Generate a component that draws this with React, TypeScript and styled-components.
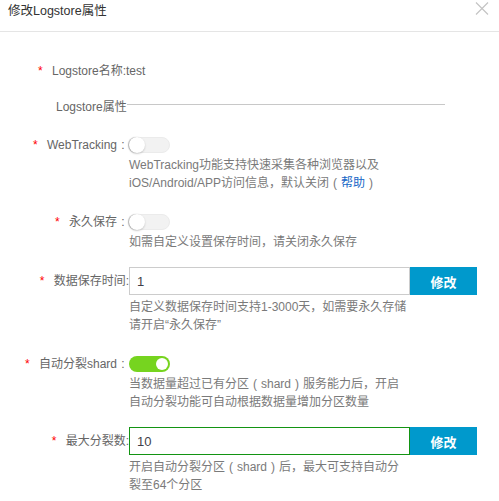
import React from 'react';
import styled, { createGlobalStyle } from 'styled-components';

const GlobalStyle = createGlobalStyle`
  html, body { margin: 0; padding: 0; background: #fff; }
  body {
    font-family: "Liberation Sans", "Noto Sans CJK SC", sans-serif;
    font-size: 12px;
    color: #666;
  }
  * { box-sizing: border-box; }
`;

const Dialog = styled.div`
  width: 499px;
  height: 501px;
  background: #fff;
  overflow: hidden;
`;

const Header = styled.header`
  height: 32px;
  border-bottom: 1px solid #e5e5e5;
  display: flex;
  justify-content: space-between;
  align-items: flex-start;
  padding: 0 10px 0 8px;
`;

const Title = styled.h1`
  margin: 0;
  font-size: 12.5px;
  font-weight: normal;
  line-height: 22px;
  color: #333;
`;

const Close = styled.button`
  margin-top: 2px;
  padding: 0;
  border: none;
  background: none;
  width: 14px;
  height: 13px;
  display: flex;
`;

const Body = styled.div`
  padding-top: 29px;
`;

const Star = styled.span`
  display: inline-block;
  width: 14px;
  text-align: left;
  color: #f00;
`;

/* full-width punctuation, drawn centred in a 1em box */
const Punct = styled.span`
  display: inline-block;
  width: 12px;
  text-align: center;
`;

const NameRow = styled.div`
  padding-left: 38px;
  line-height: 20px;
  color: #666;
`;

const Legend = styled.div`
  margin-top: 16px;
  width: 445px;
  padding-left: 56px;
  display: flex;
  align-items: flex-start;
`;

const LegendText = styled.span`
  line-height: 20px;
  color: #666;
  white-space: nowrap;
`;

const LegendLine = styled.span`
  flex: 1;
  height: 1px;
  margin-top: 7px;
  background: #c8c8c8;
`;

const Form = styled.div`
  margin-top: 14px;
  display: flex;
  flex-direction: column;
  gap: 16px;
`;

const Item = styled.div`
  display: flex;
  align-items: flex-start;
`;

const Label = styled.label`
  width: 129px;
  flex-shrink: 0;
  text-align: right;
  line-height: 28px;
  white-space: nowrap;
  color: #666;
`;

const Content = styled.div`
  display: flex;
  flex-direction: column;
`;

const ToggleLine = styled.div`
  padding-top: 6px;
  height: 22px;
  display: flex;
`;

const InputLine = styled.div`
  display: flex;
  height: 28px;
`;

const Track = styled.span<{ $on?: boolean }>`
  position: relative;
  display: block;
  width: 41px;
  height: 16px;
  border-radius: 8px;
  background: ${(p) => (p.$on ? '#76d41f' : '#f2f2f2')};
  border: ${(p) => (p.$on ? 'none' : '1px solid #ebebeb')};
`;

const Knob = styled.span<{ $on?: boolean }>`
  position: absolute;
  top: ${(p) => (p.$on ? '2px' : '-1px')};
  left: ${(p) => (p.$on ? '27px' : '-1px')};
  width: ${(p) => (p.$on ? '12px' : '16px')};
  height: ${(p) => (p.$on ? '12px' : '16px')};
  border-radius: 50%;
  background: #fff;
  box-shadow: ${(p) => (p.$on ? 'none' : '-1px 0 1px rgba(0,0,0,0.28), 0 1px 2px rgba(0,0,0,0.18)')};
`;

const TextInput = styled.input<{ $focus?: boolean }>`
  width: 281px;
  height: 28px;
  margin: 0;
  padding: 0 7px;
  border: 1px solid ${(p) => (p.$focus ? '#139413' : '#cccccc')};
  outline: none;
  font-family: "Liberation Sans", "Noto Sans CJK SC", sans-serif;
  font-size: 13px;
  color: #3f3f4a;
  background: #fff;
`;

const Button = styled.button`
  width: 67px;
  height: 28px;
  margin: 0;
  border: none;
  background: #0099cc;
  color: #fff;
  font-family: "Noto Sans CJK SC", sans-serif;
  font-size: 13px;
  font-weight: bold;
  padding: 0;
`;

const Help = styled.div`
  margin-top: 3px;
  line-height: 18px;
  color: #7a7a7a;
  white-space: nowrap;
`;

const HelpLink = styled.a`
  color: #1667c6;
  text-decoration: none;
`;

const Toggle = ({ on }: { on?: boolean }) => (
  <Track $on={on}>
    <Knob $on={on} />
  </Track>
);

export default function App() {
  return (
    <Dialog>
      <GlobalStyle />
      <Header>
        <Title>修改Logstore属性</Title>
        <Close aria-label="close">
          <svg width="14" height="13" viewBox="0 0 14 13">
            <path d="M1 0.5 L13 12.5 M13 0.5 L1 12.5" stroke="#c4c4c4" strokeWidth="1.2" fill="none" />
          </svg>
        </Close>
      </Header>
      <Body>
        <NameRow>
          <Star>*</Star>Logstore名称:test
        </NameRow>
        <Legend>
          <LegendText>Logstore属性</LegendText>
          <LegendLine />
        </Legend>
        <Form>
          <Item>
            <Label>
              <Star>*</Star>WebTracking<Punct>:</Punct>
            </Label>
            <Content>
              <ToggleLine>
                <Toggle />
              </ToggleLine>
              <Help>
                WebTracking功能支持快速采集各种浏览器以及
                <br />
                iOS/Android/APP访问信息，默认关闭<Punct>(</Punct>
                <HelpLink href="#">帮助</HelpLink>
                <Punct>)</Punct>
              </Help>
            </Content>
          </Item>
          <Item>
            <Label>
              <Star>*</Star>永久保存<Punct>:</Punct>
            </Label>
            <Content>
              <ToggleLine>
                <Toggle />
              </ToggleLine>
              <Help>如需自定义设置保存时间，请关闭永久保存</Help>
            </Content>
          </Item>
          <Item>
            <Label>
              <Star>*</Star>数据保存时间:
            </Label>
            <Content>
              <InputLine>
                <TextInput readOnly value="1" />
                <Button>修改</Button>
              </InputLine>
              <Help>
                自定义数据保存时间支持1-3000天，如需要永久存储
                <br />
                请开启“永久保存”
              </Help>
            </Content>
          </Item>
          <Item>
            <Label>
              <Star>*</Star>自动分裂shard<Punct>:</Punct>
            </Label>
            <Content>
              <ToggleLine>
                <Toggle on />
              </ToggleLine>
              <Help>
                当数据量超过已有分区<Punct>(</Punct>shard<Punct>)</Punct>服务能力后，开启
                <br />
                自动分裂功能可自动根据数据量增加分区数量
              </Help>
            </Content>
          </Item>
          <Item>
            <Label>
              <Star>*</Star>最大分裂数:
            </Label>
            <Content>
              <InputLine>
                <TextInput readOnly value="10" $focus />
                <Button>修改</Button>
              </InputLine>
              <Help>
                开启自动分裂分区<Punct>(</Punct>shard<Punct>)</Punct>后，最大可支持自动分
                <br />
                裂至64个分区
              </Help>
            </Content>
          </Item>
        </Form>
      </Body>
    </Dialog>
  );
}
